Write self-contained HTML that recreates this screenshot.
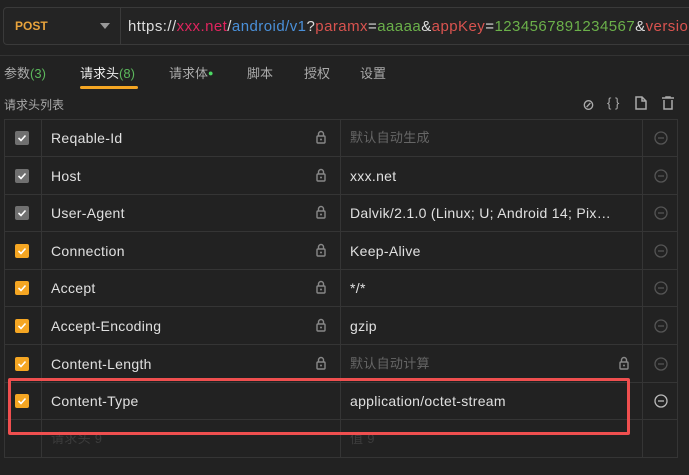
<!DOCTYPE html>
<html><head><meta charset="utf-8"><style>
*{margin:0;padding:0;box-sizing:border-box}
body{width:689px;height:475px;background:#222222;overflow:hidden;font-family:"Liberation Sans","Noto Sans CJK SC",sans-serif;color:#ddd;position:relative}
.a{position:absolute}
.url{left:3px;top:7px;width:700px;height:38px;border:1px solid #3a3a3a;border-radius:4px;background:#242424}
.tab{position:absolute;top:63px;font-size:13px;color:#aaa}
.row{position:absolute;left:4px;width:674px;height:38px;border-bottom:1px solid #353535}
.cb{position:absolute;left:11px;top:12px;width:14px;height:14px;border-radius:2px;background:#707070}
.cb.o{background:#f5a623}
.cb svg{position:absolute;left:2px;top:2px}
.n{position:absolute;left:47px;top:11px;font-size:14px;color:#e0e0e0;letter-spacing:.3px}
.v{position:absolute;left:346px;top:11px;font-size:14px;color:#e0e0e0;letter-spacing:.3px;white-space:nowrap}
.ph{color:#666;top:8px}
.lock{position:absolute;top:11px}
.minus{position:absolute;left:650px;top:12px}
</style></head><body>
<div class="a url"></div>
<div class="a" style="left:120px;top:8px;width:1px;height:36px;background:#3a3a3a"></div>
<div class="a" style="left:15px;top:19px;font-size:12px;font-weight:bold;color:#e8a33c">POST</div>
<div class="a" style="left:100px;top:23px;width:0;height:0;border-left:5px solid transparent;border-right:5px solid transparent;border-top:6px solid #999"></div>
<div class="a" style="left:128px;top:18px;font-size:15px;color:#ddd;white-space:nowrap;letter-spacing:.45px">https://<span style="color:#e0245e">xxx.net</span>/<span style="color:#4a90d9">android/v1</span>?<span style="color:#d9534f">paramx</span>=<span style="color:#6bb04a">aaaaa</span>&amp;<span style="color:#d9534f">appKey</span>=<span style="color:#6bb04a">1234567891234567</span>&amp;<span style="color:#d9534f">version</span></div>
<div class="a" style="left:0;top:55px;width:689px;height:1px;background:#333"></div>
<div class="tab" style="left:4px">参数<span style="color:#5cb85c">(3)</span></div>
<div class="tab" style="left:80px;color:#eee">请求头<span style="color:#5cb85c">(8)</span></div>
<div class="a" style="left:80px;top:86px;width:58px;height:3px;background:#f5a623;border-radius:2px"></div>
<div class="tab" style="left:169px">请求体<span style="color:#4cd964;font-size:9px;vertical-align:2px">●</span></div>
<div class="tab" style="left:247px">脚本</div>
<div class="tab" style="left:304px">授权</div>
<div class="tab" style="left:360px">设置</div>
<div class="a" style="left:4px;top:96px;font-size:12px;color:#aaa">请求头列表</div>
<div class="a" style="left:582px;top:95px;font-size:13px;color:#aaa;font-weight:bold">⊘</div>
<div class="a" style="left:607px;top:95px;font-size:13px;color:#aaa">{ }</div>
<svg class="a" style="left:635px;top:96px" width="12" height="14" viewBox="0 0 12 14"><path d="M1 1h6l4 4v8H1z M7 1v4h4" fill="none" stroke="#aaa" stroke-width="1.5"/></svg>
<svg class="a" style="left:662px;top:96px" width="12" height="14" viewBox="0 0 12 14"><path d="M0 2h12M4 2V1h4v1M2 4v9h8V4" fill="none" stroke="#aaa" stroke-width="1.5"/></svg>
<div class="a" style="left:4px;top:119px;width:674px;height:338px;border:1px solid #353535;border-bottom:none"></div>
<div class="a" style="left:41px;top:119px;width:1px;height:338px;background:#353535"></div>
<div class="a" style="left:340px;top:119px;width:1px;height:338px;background:#353535"></div>
<div class="a" style="left:642px;top:119px;width:1px;height:338px;background:#353535"></div>
<div id="rows"></div>
<script>
var d=[["Reqable-Id","默认自动生成",0,1,1,0],["Host","xxx.net",0,1,0,0],["User-Agent","Dalvik/2.1.0 (Linux; U; Android 14; Pix…",0,1,0,0],["Connection","Keep-Alive",1,1,0,0],["Accept","*/*",1,1,0,0],["Accept-Encoding","gzip",1,1,0,0],["Content-Length","默认自动计算",1,1,1,1],["Content-Type","application/octet-stream",1,0,0,0]];
var h="",lk='<svg width="10" height="14" viewBox="0 0 10 14"><path d="M2.5 6V4a2.5 2.5 0 0 1 5 0v2" fill="none" stroke="#888" stroke-width="1.4"/><rect x="1" y="6" width="8" height="7" rx="1" fill="none" stroke="#888" stroke-width="1.4"/><circle cx="5" cy="9.5" r="1" fill="#888"/></svg>';
for(var i=0;i<9;i++){var t=119+i*37.6;h+='<div class="row" style="top:'+t+'px">';
if(i<8){var r=d[i];h+='<div class="cb'+(r[2]?' o':'')+'"><svg width="10" height="10" viewBox="0 0 10 10"><path d="M1.5 5l2.5 2.5 4.5-5" fill="none" stroke="#fff" stroke-width="1.6"/></svg></div>';
h+='<div class="n">'+r[0]+'</div><div class="v'+(r[4]?' ph':'')+'" style="'+(r[4]?'font-size:13px':'')+'">'+r[1]+'</div>';
if(r[3])h+='<div class="lock" style="left:312px">'+lk+'</div>';
if(r[5])h+='<div class="lock" style="left:615px">'+lk+'</div>';
var c=i==7?'#bbb':'#555';h+='<svg class="minus" width="14" height="14" viewBox="0 0 14 14"><circle cx="7" cy="7" r="6" fill="none" stroke="'+c+'" stroke-width="1.3"/><path d="M4 7h6" stroke="'+c+'" stroke-width="1.3"/></svg>';}
else{h+='<div class="n" style="color:#3c3c3c;font-size:13px;top:8px">请求头 9</div><div class="v" style="color:#3c3c3c;font-size:13px;top:8px">值 9</div>';}
h+='</div>';}
document.getElementById('rows').innerHTML=h;
</script>
<div class="a" style="left:8px;top:378px;width:622px;height:57px;border:3px solid #ef4f4f;border-radius:2px"></div>
</body></html>
